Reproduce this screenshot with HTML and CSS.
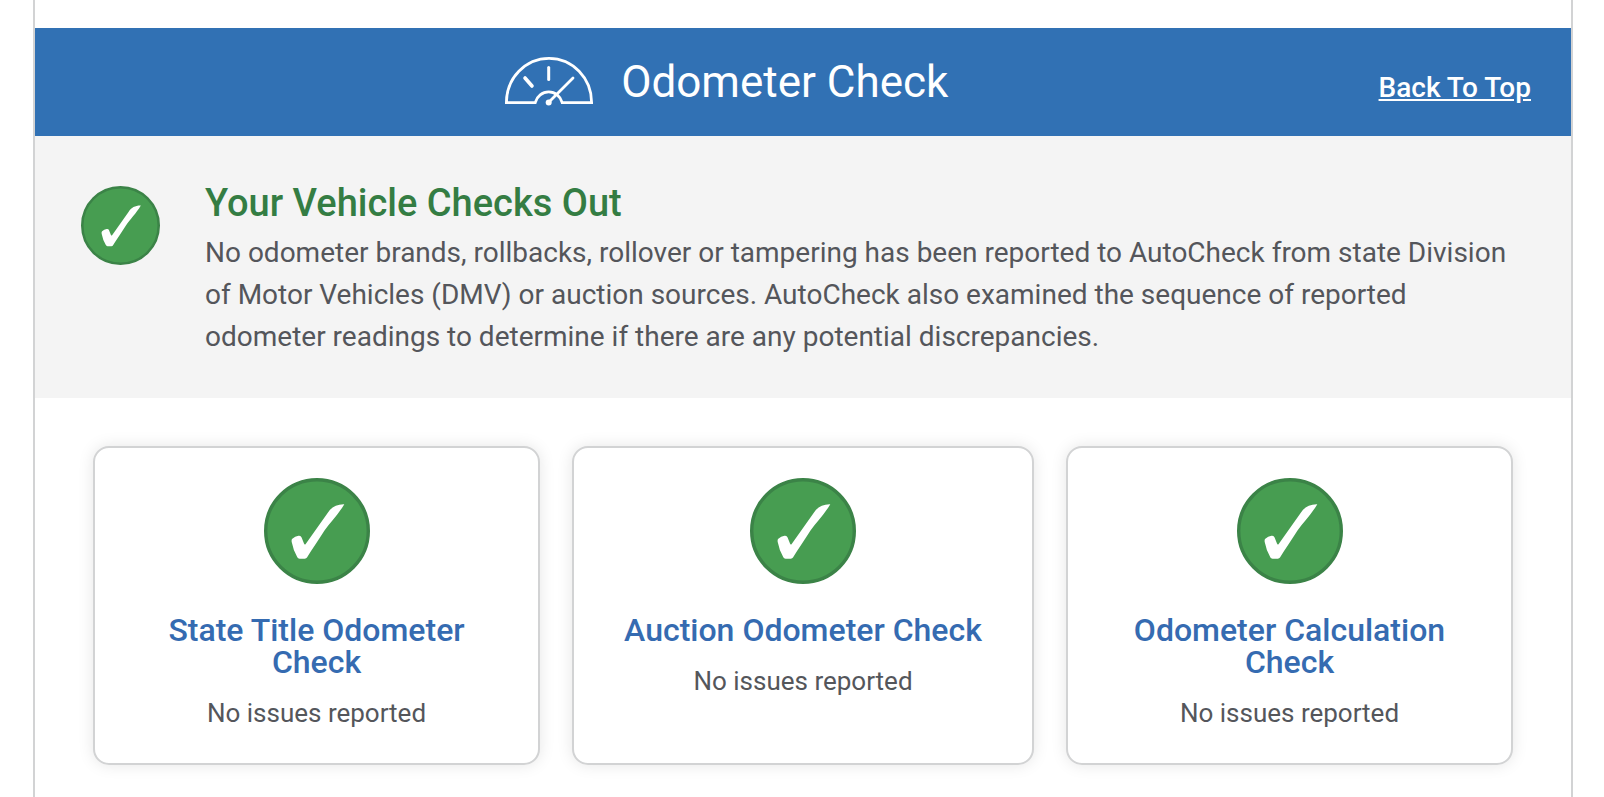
FILE: index.html
```html
<!DOCTYPE html>
<html lang="en">
<head>
    <meta charset="UTF-8">
    <meta name="viewport" content="width=device-width, initial-scale=1.0">
    <title>Odometer Check</title>
    <link rel="stylesheet" href="styles.css">
</head>
<body>
    <!-- Shared check badge -->
    <svg class="sprite" aria-hidden="true">
        <symbol id="check" viewBox="0 0 106 106">
            <circle cx="53" cy="53" r="51.3" fill="#479d51" stroke="#3b8347" stroke-width="3.4"/>
            <path fill="#fff" d="M80.300 26.200C73 26 67.500 29 64 34.500L41.500 66.300Q40.500 67 40 65.500L37.600 59.500Q36.800 57.300 34.500 57.800Q31 58.500 28.300 60.800Q27.300 61.700 27.700 64Q29.300 72.500 33.300 79.300Q34 80.700 35.500 80.700L40.800 80.700Q42.300 80.600 43 79.500C48 71.500 55 61 60.500 52.500C66 44.500 74 37 80.300 26.200Z"/>
        </symbol>
    </svg>

    <main class="report" id="top">
        <section>
            <header class="section-header">
                <h1 class="section-title">
                    <svg class="gauge-icon" viewBox="0 0 88 49" fill="none" stroke="#fff" aria-hidden="true">
                        <path stroke-width="2.800" d="M1.400 45.600A42.600 44.200 0 0 1 86.600 45.600H57.200A14 14.500 0 0 0 30.200 45.600Z"/>
                        <path stroke-width="3" stroke-linecap="round" d="M43.700 10.500V22.500"/>
                        <path stroke-width="3.600" stroke-linecap="round" d="M20 21L27 29"/>
                        <path stroke-width="2.800" stroke-linecap="round" d="M44 45L68 21"/>
                        <circle cx="43.700" cy="45.500" r="3" fill="#fff" stroke="none"/>
                    </svg>Odometer Check
                </h1>
                <a class="back-link" href="#top">Back To Top</a>
            </header>

            <div class="summary">
                <svg class="summary-icon" aria-hidden="true"><use href="#check"/></svg>
                <div class="summary-body">
                    <h2 class="summary-title">Your Vehicle Checks Out</h2>
                    <p class="summary-text">No odometer brands, rollbacks, rollover or tampering has been reported to AutoCheck from state Division of Motor Vehicles (DMV) or auction sources. AutoCheck also examined the sequence of reported odometer readings to determine if there are any potential discrepancies.</p>
                </div>
            </div>

            <div class="cards">
                <article class="card">
                    <svg class="card-icon" aria-hidden="true"><use href="#check"/></svg>
                    <h3 class="card-title">State Title Odometer Check</h3>
                    <p class="card-text">No issues reported</p>
                </article>
                <article class="card">
                    <svg class="card-icon" aria-hidden="true"><use href="#check"/></svg>
                    <h3 class="card-title">Auction Odometer Check</h3>
                    <p class="card-text">No issues reported</p>
                </article>
                <article class="card">
                    <svg class="card-icon" aria-hidden="true"><use href="#check"/></svg>
                    <h3 class="card-title">Odometer Calculation Check</h3>
                    <p class="card-text">No issues reported</p>
                </article>
            </div>
        </section>
    </main>
</body>
</html>
```
FILE: styles.css
```css
* { box-sizing: border-box; }

body {
    margin: 0;
    background: #fff;
    color: #54565b;
    font-family: Roboto, "Liberation Sans", sans-serif;
    font-size: 28px;
    line-height: 42px;
}

h1, h2, h3, p { margin: 0; }

.sprite { position: absolute; width: 0; height: 0; }

.report {
    min-height: 100vh;
    margin: 0 31px 0 33px;
    padding-top: 28px;
    border: solid #d2d3d4;
    border-width: 0 2px;
}

/* Blue bar */
.section-header {
    display: flex;
    align-items: baseline;
    padding: 28px 40px;
    background: #3171b4;
    color: #fff;
}

.section-title {
    flex: 1;
    font-size: 44px;
    font-weight: 400;
    line-height: 52px;
    text-align: center;
}

.gauge-icon {
    width: 88px;
    height: 49px;
    margin-right: 28px;
    vertical-align: -9px;
}

.back-link {
    color: #fff;
    font-weight: 500;
    line-height: 32px;
    text-decoration: underline;
}

/* Result summary */
.summary {
    display: flex;
    align-items: flex-start;
    gap: 45px;
    padding: 48px 45px 40px 46px;
    background: #f4f4f4;
}

.summary-icon {
    flex: none;
    width: 79px;
    height: 79px;
    margin-top: 2px;
}

.summary-title {
    margin-bottom: 10px;
    color: #347d43;
    font-size: 38px;
    font-weight: 500;
    line-height: 38px;
}

/* Check cards */
.cards {
    display: grid;
    grid-template-columns: 447fr 462fr 447fr;
    gap: 32px;
    padding: 48px 58px 32px;
}

.card {
    display: flex;
    flex-direction: column;
    align-items: center;
    padding: 30px 48px;
    border: 2px solid #d2d3d4;
    border-radius: 16px;
    background: #fff;
    box-shadow: 0 0 16px rgba(0, 0, 0, 0.1);
    text-align: center;
}

.card-icon {
    width: 106px;
    height: 106px;
    margin-bottom: 30px;
}

.card-title {
    margin-bottom: 16px;
    color: #356bb1;
    font-size: 32px;
    font-weight: 500;
    line-height: 32px;
}

.card-text {
    font-size: 26px;
    line-height: 39px;
}
```
